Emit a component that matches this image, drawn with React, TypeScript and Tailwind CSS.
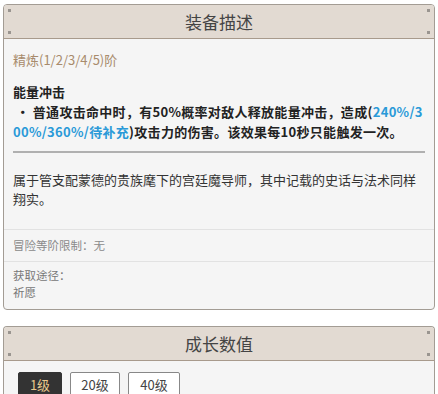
const font = { fontFamily: '"Microsoft YaHei", "Noto Sans CJK SC", "Noto Sans", sans-serif' }

function PanelHeader({ title }: { title: string }) {
  return (
    <div className="relative flex h-[34px] items-center justify-center border-b border-[#a89a8c] bg-[#e2dad2] text-[17px] text-[#444]">
      <span className="absolute left-[4px] top-[4px] h-[3px] w-[3px] bg-[#9a9590]" />
      <span className="absolute bottom-[4px] left-[4px] h-[3px] w-[3px] bg-[#9a9590]" />
      <span className="absolute right-[4px] top-[4px] h-[3px] w-[3px] bg-[#9a9590]" />
      <span className="absolute bottom-[4px] right-[4px] h-[3px] w-[3px] bg-[#9a9590]" />
      {title}
    </div>
  )
}

export default function App() {
  return (
    <div className="min-h-[394px] w-[438px] overflow-hidden bg-white px-[3px] pt-[4px]" style={font}>
      <section className="overflow-hidden rounded-[4px] border border-[#a39c94] bg-[#f5f5f5]">
        <PanelHeader title="装备描述" />
        <div className="px-[9px] pt-[11px]">
          <p className="text-[13px] leading-[20px] text-[#a88b6c]">精炼(1/2/3/4/5)阶</p>
          <div className="mt-[12px] text-[13px] font-bold leading-[20px] text-[#222]">
            <p>能量冲击</p>
            <p className="break-all tracking-[0.3px]">
              &nbsp;• 普通攻击命中时，有50%概率对敌人释放能量冲击，造成(
              <span className="text-[#2a9ad8]">240%/300%/360%/待补充</span>
              )攻击力的伤害。该效果每10秒只能触发一次。
            </p>
          </div>
          <hr className="mt-[9px] border-t-2 border-[#b0b0b0]" />
          <p className="mt-[17px] text-[13px] leading-[19px] text-[#333]">
            属于管支配蒙德的贵族麾下的宫廷魔导师，其中记载的史话与法术同样翔实。
          </p>
        </div>
        <div className="mt-[21px] border-t border-[#e2e2e2] px-[9px] py-[7px] text-[11.5px] leading-[17px] text-[#8a8a8a]">
          冒险等阶限制：无
        </div>
        <div className="border-t border-[#e2e2e2] px-[9px] pb-[8px] pt-[5px] text-[11.5px] leading-[17px] text-[#777]">
          <p>获取途径：</p>
          <p>祈愿</p>
        </div>
      </section>

      <section className="mt-[16px] overflow-hidden rounded-t-[4px] border border-b-0 border-[#a39c94] bg-[#f5f5f5]">
        <PanelHeader title="成长数值" />
        <div className="flex gap-[8px] px-[14px] pt-[11px] pb-[10px] text-[13px]">
          <button className="h-[26px] w-[44px] rounded-[2px] border border-[#333] bg-[#333] text-[#e8c88c]">1级</button>
          <button className="h-[26px] w-[50px] rounded-[2px] border border-[#888] bg-white text-[#444]">20级</button>
          <button className="h-[26px] w-[52px] rounded-[2px] border border-[#888] bg-white text-[#444]">40级</button>
        </div>
      </section>
    </div>
  )
}
